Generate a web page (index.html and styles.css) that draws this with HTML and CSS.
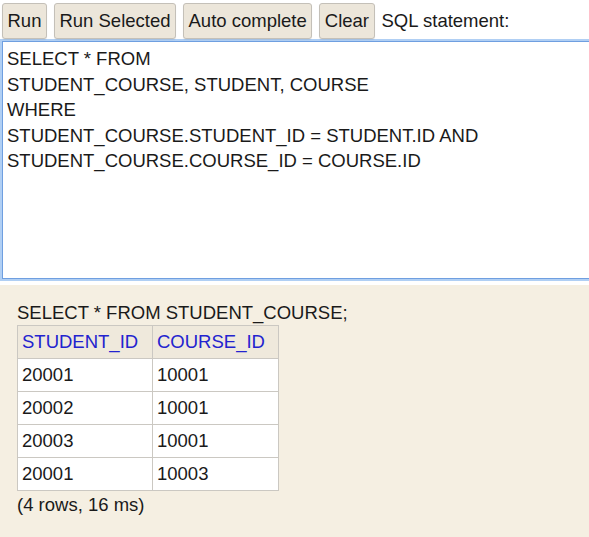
FILE: index.html
```html
<!DOCTYPE html>
<html>
<head>
<meta charset="utf-8">
<link rel="stylesheet" href="styles.css">
</head>
<body>
<div class="toolbar">
  <button class="btn">Run</button>
  <button class="btn">Run Selected</button>
  <button class="btn">Auto complete</button>
  <button class="btn">Clear</button>
  <span class="label">SQL statement:</span>
</div>
<div class="editor">
  <div class="line">SELECT * FROM</div>
  <div class="line">STUDENT_COURSE, STUDENT, COURSE</div>
  <div class="line">WHERE</div>
  <div class="line">STUDENT_COURSE.STUDENT_ID = STUDENT.ID AND</div>
  <div class="line">STUDENT_COURSE.COURSE_ID = COURSE.ID</div>
</div>
<div class="result">
  <div class="query">SELECT * FROM STUDENT_COURSE;</div>
  <table class="grid">
    <thead>
      <tr><th>STUDENT_ID</th><th>COURSE_ID</th></tr>
    </thead>
    <tbody>
      <tr><td>20001</td><td>10001</td></tr>
      <tr><td>20002</td><td>10001</td></tr>
      <tr><td>20003</td><td>10001</td></tr>
      <tr><td>20001</td><td>10003</td></tr>
    </tbody>
  </table>
  <div class="stats">(4 rows, 16 ms)</div>
</div>
</body>
</html>
```
FILE: styles.css
```css
html, body {
  margin: 0;
  padding: 0;
  background: #ffffff;
  overflow: hidden;
  height: 537px;
  font-family: "Liberation Sans", Arial, sans-serif;
  color: #1a1a1a;
}

.toolbar {
  display: flex;
  align-items: center;
  gap: 7px;
  padding: 3px 2px 0 2px;
  height: 36px;
}

.btn {
  font-family: "Liberation Sans", Arial, sans-serif;
  font-size: 18.5px;
  color: #1a1a1a;
  background: #ece6da;
  border: 1px solid #c4c0b8;
  border-radius: 3px;
  height: 36px;
  padding: 0 4.5px;
  box-shadow: 0 1px 1px rgba(0,0,0,0.08);
}

.label {
  font-size: 18.5px;
  margin-left: 0;
}

.editor {
  margin-top: 2px;
  margin-left: 2px;
  height: 232px;
  border: 1px solid #6f9fe0;
  border-right: none;
  box-shadow: 0 0 0 2px #b0cff4;
  padding: 4px 4px 0 4px;
  font-size: 18.5px;
  line-height: 25.5px;
  background: #fff;
}

.line {
  white-space: pre;
}

.result {
  margin-top: 6px;
  background: #f5efe2;
  height: 260px;
  padding: 17px 17px 0 17px;
  font-size: 18.5px;
}

.query {
  line-height: 22px;
  margin-bottom: 1px;
}

.grid {
  border-collapse: collapse;
  font-size: 18.5px;
}

.grid th, .grid td {
  border: 1px solid #cbc8c2;
  text-align: left;
  padding: 0 4px;
  height: 32px;
  font-weight: normal;
}

.grid th {
  background: #efe9dc;
  color: #2323cf;
}

.grid th:first-child, .grid td:first-child {
  width: 126px;
}

.grid th:last-child, .grid td:last-child {
  width: 117px;
}

.grid td {
  background: #ffffff;
}

.stats {
  margin-top: 3px;
  line-height: 22px;
}
```
